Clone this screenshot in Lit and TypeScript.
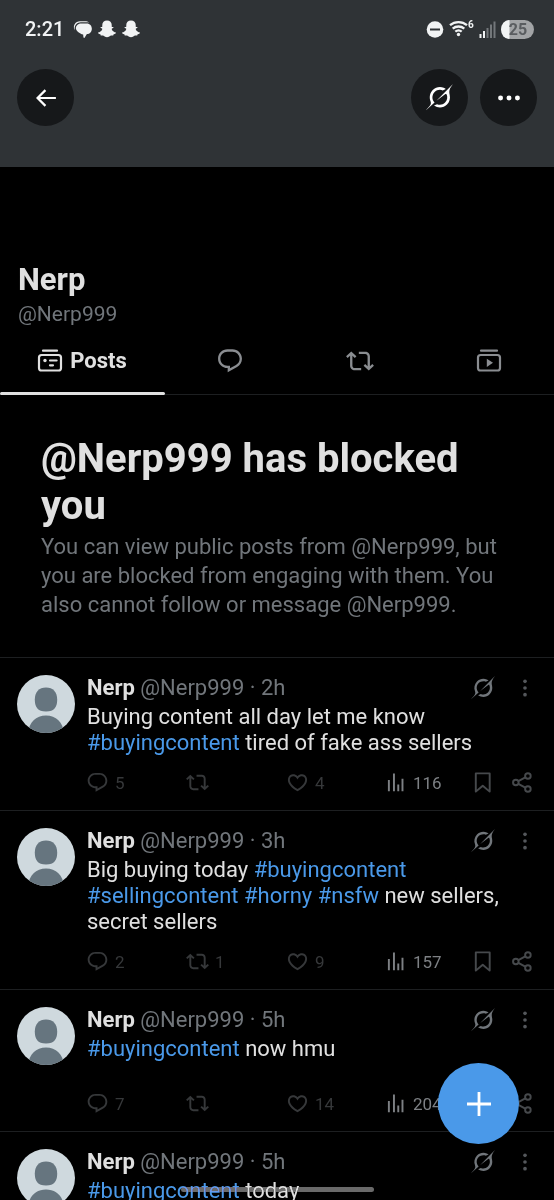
import { LitElement, html, css, svg, nothing } from "lit";
import { customElement, property } from "lit/decorators.js";

const glyphs = {
  reply: svg`<path d="M1.751 10c0-4.42 3.584-8 8.005-8h4.366c4.49 0 8.129 3.64 8.129 8.13 0 2.96-1.607 5.68-4.196 7.11l-8.054 4.46v-3.69h-.067c-4.49.1-8.183-3.51-8.183-8.01zm8.005-6c-3.317 0-6.005 2.69-6.005 6 0 3.37 2.77 6.08 6.138 6.01l.351-.01h1.761v2.3l5.087-2.81c1.951-1.08 3.163-3.13 3.163-5.36 0-3.39-2.744-6.13-6.129-6.13H9.756z"/>`,
  repost: svg`<path d="M4.5 3.88l4.432 4.14-1.364 1.46L5.5 7.55V16c0 1.1.896 2 2 2H13v2H7.5c-2.209 0-4-1.79-4-4V7.55L1.432 9.48.068 8.02 4.5 3.88zM16.5 6H11V4h5.5c2.209 0 4 1.79 4 4v8.45l2.068-1.93 1.364 1.46-4.432 4.14-4.432-4.14 1.364-1.46 2.068 1.93V8c0-1.1-.896-2-2-2z"/>`,
  like: svg`<path d="M16.697 5.5c-1.222-.06-2.679.51-3.89 2.16l-.805 1.09-.806-1.09C9.984 6.01 8.526 5.44 7.304 5.5c-1.243.07-2.349.78-2.91 1.91-.552 1.12-.633 2.78.479 4.82 1.074 1.97 3.257 4.27 7.129 6.61 3.87-2.34 6.052-4.64 7.126-6.61 1.111-2.04 1.03-3.7.477-4.82-.561-1.13-1.666-1.84-2.908-1.91zm4.187 7.69c-1.351 2.48-4.001 5.12-8.379 7.67l-.503.3-.504-.3c-4.379-2.55-7.029-5.19-8.382-7.67-1.36-2.5-1.41-4.86-.514-6.67.887-1.79 2.647-2.91 4.601-3.01 1.651-.09 3.368.56 4.798 2.01 1.429-1.45 3.146-2.1 4.796-2.01 1.954.1 3.714 1.22 4.601 3.01.896 1.81.846 4.17-.514 6.67z"/>`,
  views: svg`<path d="M2 9.500h2V21H2zM7.300 2.700h2V21h-2zM11.800 14h2v7h-2zM16.200 8.200h2V21h-2z"/>`,
  bookmark: svg`<path fill="none" stroke="currentColor" stroke-width="2" stroke-linejoin="round" d="M5 2.500h14.500v19l-7.250-6.200L5 21.500z"/>`,
  share: svg`<g fill="none" stroke="currentColor" stroke-width="2"><circle cx="4" cy="12" r="2.900"/><circle cx="16.600" cy="5.200" r="2.900"/><circle cx="16.600" cy="18.800" r="2.900"/><path d="M6.600 10.600l7.300-3.900M6.600 13.400l7.300 3.900"/></g>`,
  more: svg`<circle cx="12" cy="4" r="2.2"/><circle cx="12" cy="12" r="2.2"/><circle cx="12" cy="20" r="2.2"/>`,
  dots: svg`<circle cx="2.800" cy="12" r="2.700"/><circle cx="12" cy="12" r="2.700"/><circle cx="21.200" cy="12" r="2.700"/>`,
  back: svg`<path fill="none" stroke="currentColor" stroke-width="2.4" d="M22.800 12H2.800M11.400 3.400L2.800 12l8.600 8.600"/>`,
  plus: svg`<path d="M10.6 0h2.8v10.6H24v2.8H13.4V24h-2.8V13.4H0v-2.8h10.6z"/>`,
  posts: svg`<g fill="none" stroke="currentColor" stroke-width="2.200" stroke-linecap="round"><rect x="1" y="6" width="22" height="15.5" rx="2.6"/><path d="M5 1.700h14M12 11.500h6.600M12 16.300h3"/></g><circle cx="7" cy="11.500" r="1.7"/>`,
  video: svg`<g fill="none" stroke="currentColor" stroke-width="2.200" stroke-linecap="round"><rect x="1" y="6" width="22" height="15.5" rx="2.6"/><path d="M4 1.700h16"/></g><path d="M9.8 9.700v8.2l6.2-4.1z"/>`,
  grok: svg`<path transform="scale(.7273)" d="M12.745 20.54l10.97-8.19c.539-.4 1.307-.244 1.564.38 1.349 3.288.746 7.241-1.938 9.955-2.683 2.714-6.417 3.31-9.83 1.954l-3.728 1.745c5.347 3.697 11.84 2.782 15.898-1.324 3.219-3.255 4.216-7.692 3.284-11.693l.008.009c-1.351-5.878.332-8.227 3.782-13.031L33 0l-4.54 4.59v-.014L12.743 20.544m-2.263 1.987c-3.837-3.707-3.175-9.446.1-12.755 2.42-2.449 6.388-3.448 9.852-1.979l3.72-1.737c-.67-.49-1.53-1.017-2.515-1.387-4.455-1.854-9.789-.931-13.41 2.728-3.483 3.523-4.579 8.94-2.697 13.561 1.405 3.454-.899 5.898-3.22 8.364C1.49 30.2.666 31.074 0 32l10.478-9.466"/>`,
  chat: svg`<path d="M.8 13.500C-2 7 2 1.800 8 1.600h6.500c2.300 0 4.300.5 5.900 1.900-1.200-.3-2.300-.4-3.600-.4H9C4.500 3.200 1 6.800.8 11.500z"/><path d="M9.500 4.600h7.500c4.200 0 6.800 3.200 6.800 6.900 0 4-2.700 7-6.600 7.200l-3.300 5.300-1.300-.6-.4-4C7.500 18 2.300 14.500 2.500 10.600 2.700 7 6 4.600 9.500 4.600z"/>`,
  ghost: svg`<path d="M12 .6c3.900 0 6.300 2.600 6.300 6 0 .9 0 1.700-.1 2.500.8.4 1.700-.2 2.300.3.700.7-.9 1.700-2.200 2.300-.3.900 1.200 2.800 2.500 3.700.9.7 2 1.100 3.100 1.400.6 1-1 2-3 2.300-.4.500-.1 1.400-.8 1.600-1 .2-2.100-.3-3.600.4-1.200.700-2.500 2-4.500 2s-3.300-1.300-4.500-2c-1.500-.7-2.600-.2-3.600-.4-.7-.2-.4-1.100-.8-1.600-2-.3-3.600-1.300-3-2.300 1.100-.3 2.200-.7 3.100-1.400 1.300-.9 2.800-2.800 2.500-3.700-1.300-.6-2.900-1.600-2.200-2.300.6-.5 1.500.1 2.300-.3C5.700 8.300 5.700 7.500 5.700 6.600c0-3.400 2.400-6 6.300-6z"/>`,
};

type GlyphName = keyof typeof glyphs;

@customElement("x-icon")
export class XIcon extends LitElement {
  @property() name: GlyphName = "reply";

  static styles = css`
    :host { display: block; flex: none; width: 23px; height: 23px; }
    .glyph { display: block; width: 100%; height: 100%; overflow: visible; fill: currentColor; }
  `;

  render() {
    return html`<svg class="glyph" viewBox="0 0 24 24" aria-hidden="true">${glyphs[this.name]}</svg>`;
  }
}

interface Post {
  age: string;
  text: string;
  replies?: string;
  reposts?: string;
  likes?: string;
  views?: string;
}

@customElement("x-post")
export class XPost extends LitElement {
  @property({ attribute: false }) post!: Post;

  static styles = css`
    :host { display: block; border-bottom: 1px solid #1d1f21; }
    .post { display: grid; grid-template-columns: 58px minmax(0, 1fr); column-gap: 12px; padding: 17px 20px 19px 17px; }
    .avatar { display: block; width: 58px; height: 58px; }
    .body { min-height: 70px; }
    .head { display: flex; align-items: center; height: 26px; margin-bottom: 3px; font-size: 22px; line-height: 26px; color: #71767b; }
    .who { flex: 1; white-space: nowrap; }
    .name { font-weight: 700; color: #e0e0e0; }
    button { display: flex; align-items: center; gap: 6px; margin: 0; padding: 0; border: 0; background: none; font: inherit; color: inherit; }
    .grok { width: 24px; height: 24px; }
    .more { width: 20px; height: 20px; color: #54575b; }
    .tools { display: flex; align-items: center; gap: 20px; margin-right: -1px; }
    .text { margin: 0; font-size: 22px; line-height: 26px; color: #e0e0e0; }
    .tag { color: #4a99e9; text-decoration: none; }
    .actions { display: grid; grid-template-columns: repeat(3, 1fr) 85px 41px 22px; align-items: center; height: 20px; margin: 15px 0 0 -1px; font-size: 17px; line-height: 20px; color: #36383a; }
    .views { gap: 4px; color: #7d8084; }
    .save, .share { color: #46494c; }
  `;

  private words(text: string) {
    return text.split(/(#\w+)/).map((part) =>
      part.startsWith("#") ? html`<a class="tag" href="#">${part}</a>` : part
    );
  }

  private action(label: string, icon: GlyphName, count = "", cls = "") {
    return html`<button class=${cls} aria-label=${label}><x-icon name=${icon}></x-icon>${count ? html`<span>${count}</span>` : nothing}</button>`;
  }

  render() {
    const p = this.post;
    return html`
      <article class="post">
        <svg class="avatar" viewBox="0 0 58 58" role="img" aria-label="Nerp">
          <clipPath id="round"><circle cx="29" cy="29" r="29"/></clipPath>
          <g clip-path="url(#round)">
            <rect width="58" height="58" fill="#cfd9de"/>
            <path fill="#66757f" d="M29 12.500c7 0 11.200 4.700 11.200 12 0 7.500-2.700 12-11.200 12s-11.200-4.500-11.200-12c0-7.300 4.200-12 11.200-12z"/>
            <path fill="#66757f" d="M11 58c1-11 8-17.500 18-17.500S46 47 47 58z"/>
          </g>
        </svg>
        <div class="content">
          <div class="body">
            <div class="head">
              <span class="who"><span class="name">Nerp</span> @Nerp999 · ${p.age}</span>
              <span class="tools">
                <button aria-label="Explain this post"><x-icon class="grok" name="grok"></x-icon></button>
                <button aria-label="More"><x-icon class="more" name="more"></x-icon></button>
              </span>
            </div>
            <p class="text">${this.words(p.text)}</p>
          </div>
          <div class="actions">
            ${this.action("Reply", "reply", p.replies)}
            ${this.action("Repost", "repost", p.reposts)}
            ${this.action("Like", "like", p.likes)}
            ${this.action("Views", "views", p.views, "views")}
            ${this.action("Bookmark", "bookmark", "", "save")}
            ${this.action("Share", "share", "", "share")}
          </div>
        </div>
      </article>
    `;
  }
}

const posts: Post[] = [
  { age: "2h", text: "Buying content all day let me know #buyingcontent tired of fake ass sellers", replies: "5", likes: "4", views: "116" },
  { age: "3h", text: "Big buying today #buyingcontent #sellingcontent #horny #nsfw new sellers, secret sellers", replies: "2", reposts: "1", likes: "9", views: "157" },
  { age: "5h", text: "#buyingcontent now hmu", replies: "7", likes: "14", views: "204" },
  { age: "5h", text: "#buyingcontent today" },
];

@customElement("app-root")
export class AppRoot extends LitElement {
  static styles = css`
    :host { display: block; position: relative; height: 100vh; overflow: hidden; background: #000; color: #e0e0e0; font-family: Roboto, "Noto Sans", sans-serif; }
    button { display: flex; align-items: center; justify-content: center; margin: 0; padding: 0; border: 0; background: none; font: inherit; color: inherit; }
    .banner { background: #2f3336; height: 167px; }
    .status { display: flex; align-items: center; gap: 4px; height: 58px; padding: 0 20px 0 25px; color: #f1f3f4; }
    .clock { font-size: 20px; line-height: 26px; font-weight: 500; margin-right: 6px; }
    .app { width: 18px; height: 18px; margin-right: 2px; }
    .spacer { flex: 1; }
    .signals { display: block; width: 108px; height: 20px; }
    .nav { display: flex; gap: 12px; padding: 11px 17px; }
    .round { width: 57px; height: 57px; border-radius: 50%; background: #16181a; color: #fff; }
    .nav x-icon { width: 22px; height: 22px; }
    .nav .big { width: 27px; height: 27px; }
    .profile { padding: 96px 18px 0; }
    .title { margin: 0; font-size: 31px; line-height: 34px; font-weight: 700; }
    .handle { margin: 3px 0 0; font-size: 21px; line-height: 29px; color: #71767b; }
    .tabs { display: flex; height: 65px; border-bottom: 1px solid #1d1f21; color: #8a8d91; }
    .tab { flex: 1; padding-bottom: 2px; }
    .tab x-icon { width: 24px; height: 24px; }
    .tab .wide { width: 28px; height: 28px; }
    .active { position: relative; flex: none; width: 165px; gap: 8px; color: #e0e0e0; font-size: 22px; font-weight: 700; }
    .active::after { content: ""; position: absolute; left: 0; right: 0; bottom: -1px; height: 3px; border-radius: 2px; background: #e0e0e0; }
    .notice { padding: 40px 41px 38px; border-bottom: 1px solid #1d1f21; }
    .headline { margin: 0; font-size: 40px; line-height: 47px; font-weight: 700; }
    .explain { margin: 3px 0 0; font-size: 22px; line-height: 29px; color: #71767b; }
    .compose { position: absolute; right: 35px; bottom: 56px; width: 81px; height: 81px; border-radius: 50%; background: #4a99e9; color: #fff; }
    .compose x-icon { width: 24px; height: 24px; }
    .pill { position: absolute; left: 50%; bottom: 8px; width: 193px; height: 5px; margin-left: -96px; border-radius: 3px; background: #6a6a6a; mix-blend-mode: lighten; }
    .level { font-size: 16px; font-weight: 700; fill: #5a5d60; }
    .gen { font-size: 10px; font-weight: 700; fill: currentColor; }
  `;

  render() {
    return html`
      <header class="banner">
        <div class="status">
          <span class="clock">2:21</span>
          <x-icon class="app" name="chat"></x-icon>
          <x-icon class="app" name="ghost"></x-icon>
          <x-icon class="app" name="ghost"></x-icon>
          <span class="spacer"></span>
          <svg class="signals" viewBox="0 0 108 20">
            <circle cx="9" cy="10.500" r="8.300" fill="currentColor"/>
            <path d="M4 10.500h10" stroke="#2f3336" stroke-width="2"/>
            <g fill="none" stroke="currentColor" stroke-width="2.300">
              <path d="M24 6.200a13 13 0 0 1 17 0M26.700 9.600a9 9 0 0 1 11.600 0M29.300 12.700a5 5 0 0 1 6.400 0"/>
            </g>
            <circle cx="32.500" cy="15.500" r="1.700" fill="currentColor"/>
            <text class="gen" x="42" y="9">6</text>
            <path fill="currentColor" d="M53.500 15h2v4h-2zM57 12h2v7h-2z"/>
            <path fill="#73777a" d="M60.500 9h2v10h-2zM64 5.500h2V19h-2zM67.500 2.500h2V19h-2z"/>
            <rect x="75.500" y="1" width="32.500" height="19" rx="9.500" fill="#a2a4a6"/>
            <path fill="#f1f3f4" d="M83.500 1h-.5a8 9.500 0 0 0 0 19h.5z"/>
            <text class="level" x="92" y="16.300" text-anchor="middle">25</text>
          </svg>
        </div>
        <nav class="nav">
          <button class="round" aria-label="Back"><x-icon name="back"></x-icon></button>
          <span class="spacer"></span>
          <button class="round" aria-label="Grok"><x-icon class="big" name="grok"></x-icon></button>
          <button class="round" aria-label="More options"><x-icon name="dots"></x-icon></button>
        </nav>
      </header>
      <section class="profile">
        <h1 class="title">Nerp</h1>
        <p class="handle">@Nerp999</p>
      </section>
      <nav class="tabs">
        <button class="tab active"><x-icon name="posts"></x-icon>Posts</button>
        <button class="tab" aria-label="Replies"><x-icon class="wide" name="reply"></x-icon></button>
        <button class="tab" aria-label="Reposts"><x-icon class="wide" name="repost"></x-icon></button>
        <button class="tab" aria-label="Videos"><x-icon name="video"></x-icon></button>
      </nav>
      <section class="notice">
        <h2 class="headline">@Nerp999 has blocked you</h2>
        <p class="explain">You can view public posts from @Nerp999, but you are blocked from engaging with them. You also cannot follow or message @Nerp999.</p>
      </section>
      <main>${posts.map((post) => html`<x-post .post=${post}></x-post>`)}</main>
      <button class="compose" aria-label="New post"><x-icon name="plus"></x-icon></button>
      <div class="pill"></div>
    `;
  }
}
